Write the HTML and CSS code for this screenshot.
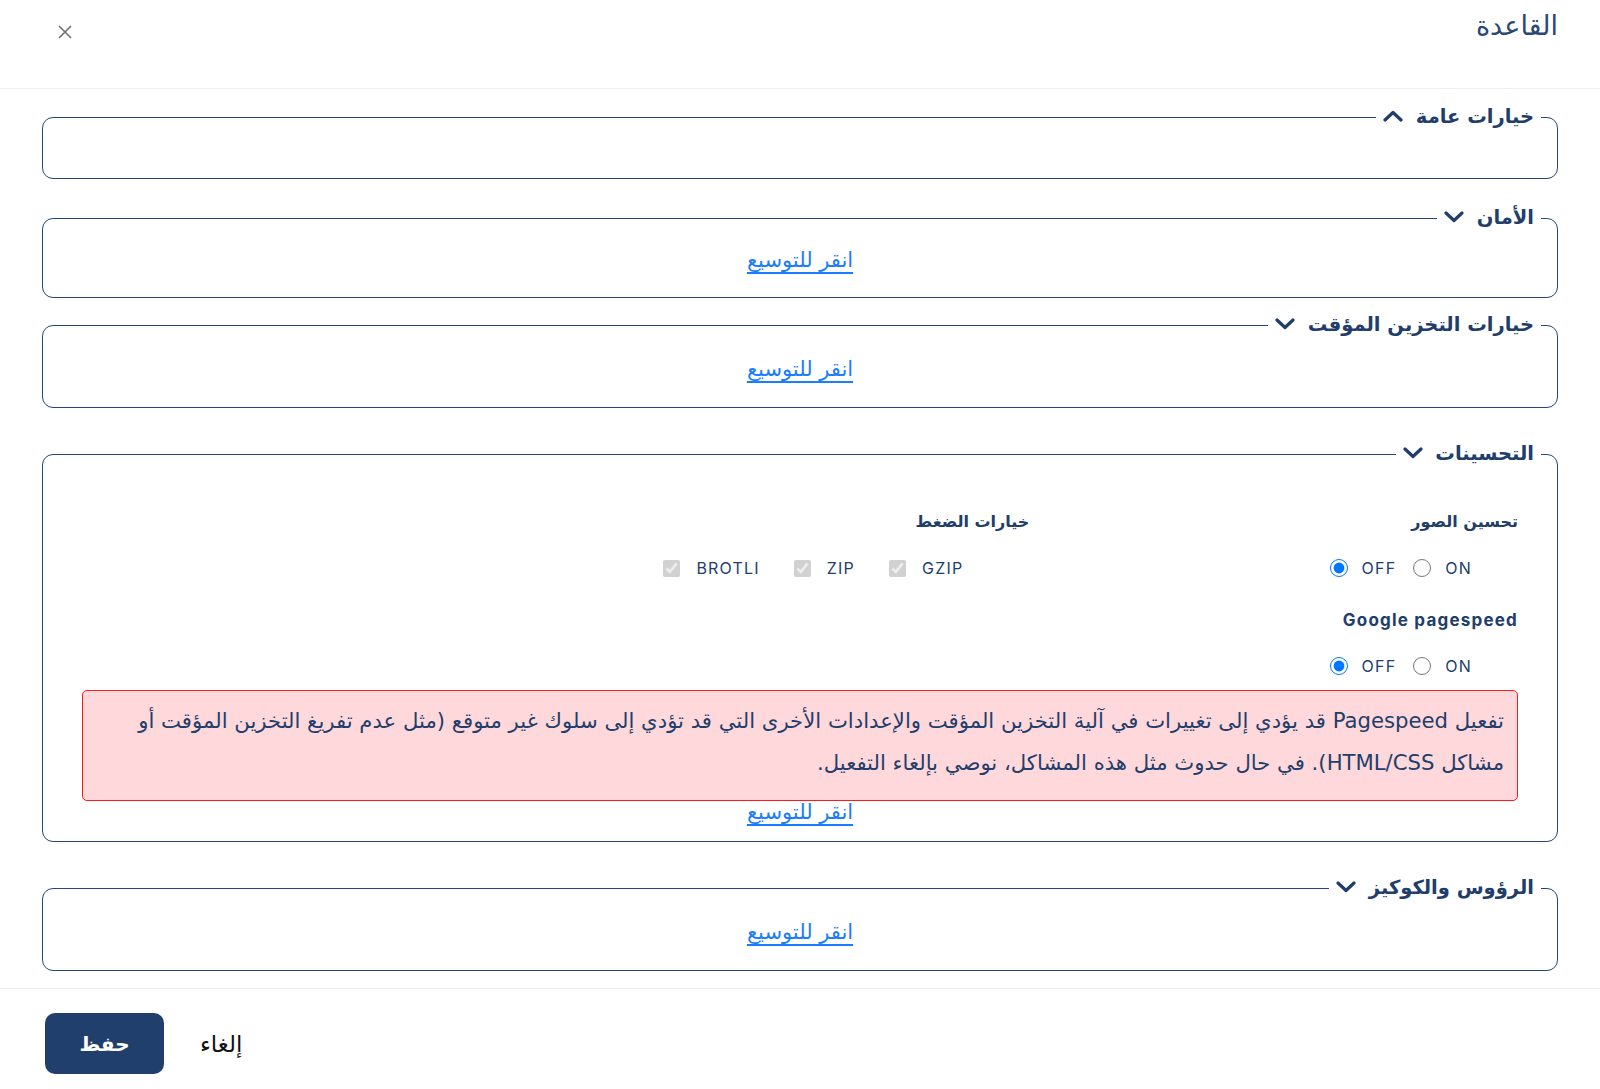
FILE: index.html
```html
<!DOCTYPE html>
<html lang="ar" dir="rtl">
<head>
    <meta charset="UTF-8">
    <meta name="viewport" content="width=device-width, initial-scale=1.0">
    <title>القاعدة</title>
    <link rel="stylesheet" href="styles.css">
</head>
<body>
    <div class="modal">
        <div class="modal-header">
            <h2 class="modal-title">القاعدة</h2>
            <button class="close" type="button" aria-label="إغلاق">
                <svg width="14" height="14" viewBox="0 0 14 14"><path d="M1 1 L13 13 M13 1 L1 13" stroke="#6f6f6f" stroke-width="1.6" fill="none"/></svg>
            </button>
        </div>

        <div class="modal-body">
            <fieldset class="group">
                <legend>خيارات عامة
                    <svg class="chevron" width="20" height="12" viewBox="0 0 20 12"><polyline points="2,10 10,2.5 18,10"/></svg>
                </legend>
                <div class="group-empty"></div>
            </fieldset>

            <fieldset class="group group-security">
                <legend>الأمان
                    <svg class="chevron" width="20" height="12" viewBox="0 0 20 12"><polyline points="2,2 10,9.5 18,2"/></svg>
                </legend>
                <div class="group-collapsed"><a href="#">انقر للتوسيع</a></div>
            </fieldset>

            <fieldset class="group group-cache">
                <legend>خيارات التخزين المؤقت
                    <svg class="chevron" width="20" height="12" viewBox="0 0 20 12"><polyline points="2,2 10,9.5 18,2"/></svg>
                </legend>
                <div class="group-collapsed"><a href="#">انقر للتوسيع</a></div>
            </fieldset>

            <fieldset class="group group-wide">
                <legend>التحسينات
                    <svg class="chevron" width="20" height="12" viewBox="0 0 20 12"><polyline points="2,2 10,9.5 18,2"/></svg>
                </legend>
                <div class="optimizations">
                    <div class="options-grid">
                        <div class="option-col">
                            <div class="option-label">تحسين الصور</div>
                            <div class="choice-row radios">
                                <label><input type="radio" name="images" checked> OFF</label>
                                <label><input type="radio" name="images"> ON</label>
                            </div>
                            <div class="option-label latin">Google pagespeed</div>
                            <div class="choice-row radios">
                                <label><input type="radio" name="pagespeed" checked> OFF</label>
                                <label><input type="radio" name="pagespeed"> ON</label>
                            </div>
                        </div>
                        <div class="option-col">
                            <div class="option-label">خيارات الضغط</div>
                            <div class="choice-row checks">
                                <label><input type="checkbox" checked disabled> BROTLI</label>
                                <label><input type="checkbox" checked disabled> ZIP</label>
                                <label><input type="checkbox" checked disabled> GZIP</label>
                            </div>
                        </div>
                        <div class="option-col"></div>
                    </div>
                    <div class="alert">تفعيل Pagespeed قد يؤدي إلى تغييرات في آلية التخزين المؤقت والإعدادات الأخرى التي قد تؤدي إلى سلوك غير متوقع (مثل عدم تفريغ التخزين المؤقت أو مشاكل HTML/CSS). في حال حدوث مثل هذه المشاكل، نوصي بإلغاء التفعيل.</div>
                    <div class="expand-link"><a href="#">انقر للتوسيع</a></div>
                </div>
            </fieldset>

            <fieldset class="group group-wide">
                <legend>الرؤوس والكوكيز
                    <svg class="chevron" width="20" height="12" viewBox="0 0 20 12"><polyline points="2,2 10,9.5 18,2"/></svg>
                </legend>
                <div class="group-collapsed"><a href="#">انقر للتوسيع</a></div>
            </fieldset>
        </div>

        <div class="modal-footer">
            <button class="btn-cancel" type="button">إلغاء</button>
            <button class="btn-save" type="button">حفظ</button>
        </div>
    </div>
</body>
</html>
```

FILE: styles.css
```css
body {
    margin: 0;
    font-family: "DejaVu Sans", "Noto Sans", sans-serif;
    color: #223e6b;
    background-color: #fff;
}

.modal {
    display: flex;
    flex-direction: column;
    height: 100vh;
}

.modal-header {
    display: flex;
    justify-content: space-between;
    align-items: flex-start;
    height: 89px;
    padding: 0 42px 0 58px;
    border-bottom: 1px solid #eeeeee;
    box-sizing: border-box;
}

.modal-title {
    margin: 7px 0 0;
    font-size: 27px;
    font-weight: normal;
    line-height: 38px;
    color: #2a4776;
}

.close {
    margin-top: 25px;
    padding: 0;
    border: none;
    background: none;
    cursor: pointer;
}

.modal-body {
    flex: 1;
    overflow: auto;
    padding: 16px 42px 0;
}

/* collapsible groups */
.group {
    margin: 0;
    padding: 0;
    border: 1.5px solid #284679;
    border-radius: 11px;
    min-width: 0;
}

.group legend {
    margin-inline-start: 16px;
    padding: 0 7px;
    font-size: 19.5px;
    font-weight: bold;
    line-height: 24px;
    color: #213d6a;
}

.chevron {
    margin-inline-start: 6px;
    vertical-align: 1px;
    fill: none;
    stroke: #213d6a;
    stroke-width: 3.2;
    stroke-linecap: round;
    stroke-linejoin: round;
}

.group-security {
    margin-top: 27px;
}

.group-cache {
    margin-top: 15px;
}

.group-wide {
    margin-top: 34px;
}

.group-empty {
    height: 49px;
}

.group-collapsed {
    padding: 17px 0 21px;
    text-align: center;
    line-height: 30px;
}

.group-security .group-collapsed {
    padding: 15px 0 20px;
}

a {
    font-size: 21px;
    color: #1a7dff;
    text-decoration: underline;
    text-decoration-skip-ink: none;
    text-underline-offset: 5px;
}

/* optimizations */
.optimizations {
    padding: 44px 39px 12px;
}

.options-grid {
    display: grid;
    grid-template-columns: repeat(3, 1fr);
    column-gap: 30px;
    margin-bottom: 12px;
}

.option-label {
    font-size: 16px;
    font-weight: bold;
    line-height: 24px;
    margin-bottom: 22px;
    color: #213d6a;
}

.option-label.latin {
    font-family: "Inter", "Liberation Sans", sans-serif;
    font-size: 17px;
    letter-spacing: 1.2px;
}

.choice-row {
    display: flex;
    direction: ltr;
    height: 24px;
    align-items: center;
    margin-bottom: 28px;
    font-family: "Inter", "DejaVu Sans", sans-serif;
    font-size: 16px;
    letter-spacing: 1.2px;
    color: #223e6b;
}

.choice-row:last-child {
    margin-bottom: 0;
}

.choice-row label {
    display: flex;
    align-items: center;
}

.radios {
    justify-content: flex-end;
    padding-right: 46px;
    gap: 17px;
}

.radios input {
    width: 18px;
    height: 18px;
    margin: 0 14px 0 0;
}

.checks {
    justify-content: flex-end;
    padding-right: 66px;
    gap: 34px;
}

.checks input {
    width: 17px;
    height: 17px;
    margin: 0 16px 0 0;
}

.alert {
    position: relative;
    z-index: 0;
    margin-bottom: -4px;
    padding: 9px 13px 16px;
    border: 1px solid #ff1a1a;
    border-radius: 5px;
    background-color: #ffd8db;
    font-size: 21.2px;
    line-height: 42px;
    color: #223e6b;
}

.expand-link {
    position: relative;
    z-index: 1;
    text-align: center;
    line-height: 30px;
}

/* footer */
.modal-footer {
    display: flex;
    justify-content: flex-end;
    align-items: flex-start;
    height: 101px;
    padding: 24px 45px 0;
    border-top: 1px solid #eeeeee;
    box-sizing: border-box;
    gap: 36px;
}

.btn-save {
    width: 119px;
    height: 61px;
    border: none;
    border-radius: 10px;
    background-color: #213f6d;
    color: #fff;
    font-family: inherit;
    font-size: 20px;
    font-weight: bold;
    cursor: pointer;
}

.btn-cancel {
    height: 61px;
    padding: 0;
    border: none;
    background: none;
    color: #111;
    font-family: inherit;
    font-size: 23px;
    cursor: pointer;
}
```
